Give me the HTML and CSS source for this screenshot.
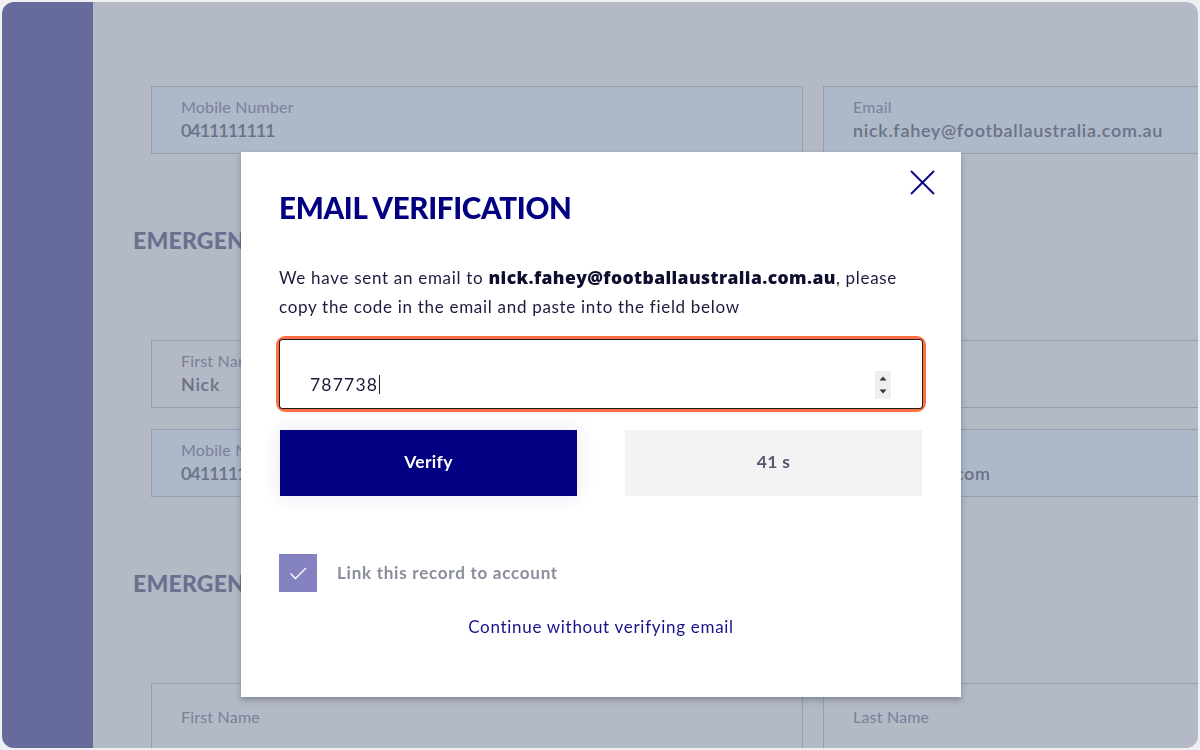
FILE: index.html
```html
<!DOCTYPE html>
<html lang="en">
<head>
<meta charset="utf-8">
<title>Email verification</title>
<link rel="stylesheet" href="styles.css">
</head>
<body>
<div class="frame">
  <aside class="sidebar"></aside>
  <main class="main">
    <div class="row">
      <div class="field filled"><span class="label">Mobile Number</span><span class="value num">0411111111</span></div>
      <div class="field filled"><span class="label">Email</span><span class="value">nick.fahey@footballaustralia.com.au</span></div>
    </div>
    <h2 class="section-title">EMERGENCY CONTACT 1</h2>
    <div class="row">
      <div class="field"><span class="label">First Name</span><span class="value">Nick</span></div>
      <div class="field"><span class="label">Last Name</span><span class="value">Fahey</span></div>
    </div>
    <div class="row row-gap">
      <div class="field filled"><span class="label">Mobile Number</span><span class="value num">0411111111</span></div>
      <div class="field filled"><span class="label">Email</span><span class="value">nick@gmail.com</span></div>
    </div>
    <h2 class="section-title">EMERGENCY CONTACT 2</h2>
    <div class="row">
      <div class="field"><span class="label">First Name</span></div>
      <div class="field"><span class="label">Last Name</span></div>
    </div>
  </main>
</div>

<div class="modal" role="dialog" aria-labelledby="modal-title">
  <button class="close" aria-label="Close">
    <svg width="25" height="25" viewBox="0 0 25 25"><path d="M1 1 L24 24 M24 1 L1 24" stroke="#0a0a80" stroke-width="2" fill="none"/></svg>
  </button>
  <h1 class="modal-title" id="modal-title">EMAIL VERIFICATION</h1>
  <p class="modal-text">We have sent an email to <strong>nick.fahey@footballaustralia.com.au</strong>, please<br>copy the code in the email and paste into the field below</p>
  <div class="code-ring">
    <div class="code-field">
      <span class="code-value">787738</span><span class="caret"></span>
      <span class="spinner">
        <svg width="16" height="28" viewBox="0 0 16 28"><path d="M4.5 9.5 L8 5.5 L11.5 9.5 Z" fill="#333"/><path d="M4.5 18.5 L8 22.5 L11.5 18.5 Z" fill="#333"/></svg>
      </span>
    </div>
  </div>
  <div class="actions">
    <button class="btn btn-primary">Verify</button>
    <button class="btn btn-timer">41 s</button>
  </div>
  <div class="check-row">
    <span class="checkbox">
      <svg width="38" height="38" viewBox="0 0 38 38"><path d="M11.5 19.5 L16.5 24.5 L27 14" stroke="#fff" stroke-width="1.4" fill="none"/></svg>
    </span>
    <span class="check-label">Link this record to account</span>
  </div>
  <a class="skip-link" href="#">Continue without verifying email</a>
</div>
</body>
</html>
```

FILE: styles.css
```css
* { box-sizing: border-box; }

html, body {
  margin: 0;
  padding: 0;
}

body {
  background: #eef0f3;
  font-family: "Lato", "Liberation Sans", sans-serif;
  overflow: hidden;
}

.frame {
  margin: 2px;
  height: 746px;
  border-radius: 12px;
  overflow: hidden;
  display: flex;
}

.sidebar {
  width: 91px;
  flex: none;
  background: #666b9c;
}

.main {
  flex: 1;
  background: #b3b9c5;
  padding: 84px 0 0 58px;
  overflow: hidden;
  min-width: 0;
}

.row {
  display: grid;
  grid-template-columns: 652px 652px;
  gap: 20px;
}

.row-gap {
  margin-top: 21px;
}

.field {
  height: 68px;
  border: 1px solid #959db0;
  padding: 0 29px;
  display: flex;
  flex-direction: column;
  justify-content: center;
}

.field.filled {
  background: #adb8c9;
}

.label {
  font-size: 16px;
  line-height: 20px;
  color: #7a8199;
  letter-spacing: 0.2px;
}

.value {
  font-size: 18px;
  line-height: 26px;
  color: #6b7285;
  font-weight: 600;
  letter-spacing: 0.7px;
}

.value.num {
  letter-spacing: -1.1px;
}

.section-title {
  margin: 71px 0 85px -18px;
  font-size: 23px;
  line-height: 30px;
  font-weight: 900;
  color: #6a7190;
  letter-spacing: 0.2px;
}

/* Modal */
.modal {
  position: fixed;
  top: 152px;
  left: 241px;
  width: 720px;
  height: 545px;
  background: #fff;
  padding: 0 38px;
  box-shadow: 0 3px 6px rgba(40, 45, 70, 0.35);
}

.close {
  position: absolute;
  top: 18px;
  right: 26px;
  width: 25px;
  height: 25px;
  padding: 0;
  border: 0;
  background: none;
  display: block;
}

.close svg { display: block; }

.modal-title {
  margin: 39px 0 0;
  font-size: 29.5px;
  line-height: 34px;
  font-weight: 900;
  color: #000080;
  letter-spacing: -0.3px;
}

.modal-text {
  margin: 38px 0 0;
  font-size: 17px;
  line-height: 29px;
  color: #1b1b3f;
  letter-spacing: 0.7px;
}

.modal-text strong {
  font-family: "Open Sans", "Lato", sans-serif;
  font-weight: 800;
  font-size: 17.5px;
  letter-spacing: 0.4px;
  color: #0d0d2e;
}

.code-ring {
  margin: 15px -3px 0;
  border: 3px solid #ff7043;
  border-radius: 9px;
}

.code-field {
  position: relative;
  height: 70px;
  border: 1px solid #1d1d1d;
  border-radius: 3px;
  padding: 20px 0 0 30px;
  display: flex;
  align-items: center;
}

.code-value {
  font-size: 17.5px;
  color: #1a1a38;
  letter-spacing: 1.2px;
}

.caret {
  width: 1px;
  height: 19px;
  background: #222;
  margin-left: 1px;
}

.spinner {
  position: absolute;
  right: 31px;
  top: 31px;
  width: 16px;
  height: 28px;
  background: #efefef;
}

.spinner svg { display: block; }

.actions {
  margin-top: 18px;
  display: grid;
  grid-template-columns: 1fr 1fr;
  gap: 48px;
  padding: 0 1px;
}

.btn {
  height: 66px;
  border: 0;
  padding: 0 0 3px;
  font-family: "Lato", "Liberation Sans", sans-serif;
  font-size: 17.5px;
  font-weight: 700;
  letter-spacing: 0.3px;
}

.btn-primary {
  background: #000080;
  color: #fff;
  box-shadow: 0 0 18px rgba(40, 50, 120, 0.12);
}

.btn-timer {
  background: #f3f3f3;
  color: #545870;
}

.check-row {
  margin-top: 58px;
  display: flex;
  align-items: center;
  gap: 20px;
}

.checkbox {
  width: 38px;
  height: 38px;
  flex: none;
  background: #8582c1;
  display: block;
}

.checkbox svg { display: block; }

.check-label {
  font-size: 17px;
  line-height: 24px;
  font-weight: 700;
  color: #8a8d9c;
  letter-spacing: 0.75px;
}

.skip-link {
  display: block;
  margin-top: 23px;
  text-align: center;
  font-size: 17px;
  line-height: 24px;
  color: #14148a;
  text-decoration: none;
  letter-spacing: 0.7px;
}
```
